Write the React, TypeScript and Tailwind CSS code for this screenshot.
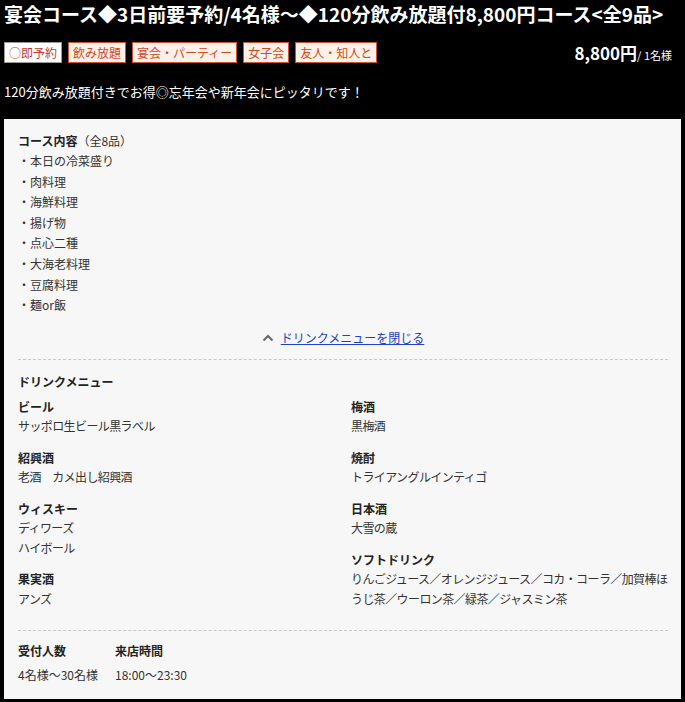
import React from "react";

const tags = ["飲み放題", "宴会・パーティー", "女子会", "友人・知人と"];

const courseItems = [
  "本日の冷菜盛り",
  "肉料理",
  "海鮮料理",
  "揚げ物",
  "点心二種",
  "大海老料理",
  "豆腐料理",
  "麺or飯",
];

type DrinkGroup = { name: string; items: string[] };

const leftDrinks: DrinkGroup[] = [
  { name: "ビール", items: ["サッポロ生ビール黒ラベル"] },
  { name: "紹興酒", items: ["老酒　カメ出し紹興酒"] },
  { name: "ウィスキー", items: ["ディワーズ", "ハイボール"] },
  { name: "果実酒", items: ["アンズ"] },
];

const rightDrinks: DrinkGroup[] = [
  { name: "梅酒", items: ["黒梅酒"] },
  { name: "焼酎", items: ["トライアングルインティゴ"] },
  { name: "日本酒", items: ["大雪の蔵"] },
  {
    name: "ソフトドリンク",
    items: ["りんごジュース／オレンジジュース／コカ・コーラ／加賀棒ほうじ茶／ウーロン茶／緑茶／ジャスミン茶"],
  },
];

function DrinkColumn({ groups }: { groups: DrinkGroup[] }) {
  return (
    <div className="flex flex-col gap-[12px]">
      {groups.map((g) => (
        <div key={g.name} className="leading-[19.5px]">
          <div className="font-bold text-[#222]">{g.name}</div>
          {g.items.map((item) => (
            <div key={item} className="break-all tracking-[-0.6px]">
              {item}
            </div>
          ))}
        </div>
      ))}
    </div>
  );
}

export default function App() {
  return (
    <div
      className="min-h-screen bg-black px-[4px] pb-[4px]"
      style={{ fontFamily: '"Noto Sans CJK JP", "Noto Sans", sans-serif' }}
    >
      {/* Header */}
      <h1 className="pt-[2px] text-[19px] font-bold leading-[24px] text-white">
        宴会コース◆3日前要予約/4名様～◆120分飲み放題付8,800円コース&lt;全9品&gt;
      </h1>

      <div className="mt-[14px] flex items-center justify-between">
        <div className="flex gap-[6px]">
          <span className="border border-[#999] bg-white px-[4px] text-[12px] leading-[19px] text-[#c0392b]">
            ○即予約
          </span>
          {tags.map((t) => (
            <span
              key={t}
              className="border border-[#c9542a] bg-[#fff0e8] px-[4px] text-[12px] leading-[19px] text-[#d04a20]"
            >
              {t}
            </span>
          ))}
        </div>
        <div className="pr-[9px] text-white">
          <span className="text-[17px] font-bold">8,800円</span>
          <span className="text-[11px]">/ 1名様</span>
        </div>
      </div>

      <p className="mt-[16px] text-[13px] leading-[20px] text-white">
        120分飲み放題付きでお得◎忘年会や新年会にピッタリです！
      </p>

      {/* Detail panel */}
      <div className="mt-[17px] bg-[#f7f7f7] pb-[14px] pl-[14px] pr-[13px] pt-[12px] text-[12px] text-[#333]">
        <div className="leading-[20.6px]">
          <div>
            <span className="font-bold text-[#222]">コース内容</span>（全8品）
          </div>
          {courseItems.map((item) => (
            <div key={item}>・{item}</div>
          ))}
        </div>

        <div className="mt-[12px] flex items-center justify-center gap-[7px] leading-[20px]">
          <svg width="12" height="8" viewBox="0 0 12 8" className="text-[#666]">
            <path d="M1.5 6.5 L6 2 L10.5 6.5" fill="none" stroke="currentColor" strokeWidth="2" />
          </svg>
          <a href="#" className="text-[#2240c8] underline">
            ドリンクメニューを閉じる
          </a>
        </div>

        <div className="mt-[11px] border-t border-dashed border-[#c8c8c8]" />

        <div className="mt-[12px] font-bold leading-[20px] text-[#222]">ドリンクメニュー</div>
        <div className="mt-[5px] grid grid-cols-2 gap-x-[16px]">
          <DrinkColumn groups={leftDrinks} />
          <DrinkColumn groups={rightDrinks} />
        </div>

        <div className="mt-[22px] border-t border-dashed border-[#c8c8c8]" />

        <div className="mt-[10px] flex leading-[20px]">
          <div className="w-[97px]">
            <div className="font-bold text-[#222]">受付人数</div>
            <div className="mt-[4px]">4名様～30名様</div>
          </div>
          <div>
            <div className="font-bold text-[#222]">来店時間</div>
            <div className="mt-[4px]">18:00～23:30</div>
          </div>
        </div>
      </div>
    </div>
  );
}
